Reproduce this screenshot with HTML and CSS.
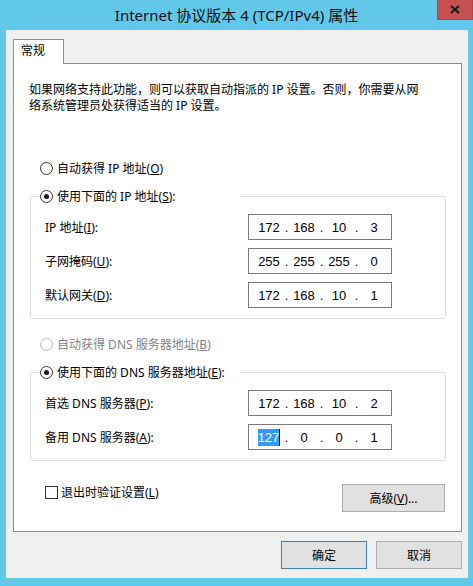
FILE: index.html
```html
<!DOCTYPE html>
<html lang="zh-CN">
<head>
  <meta charset="UTF-8">
  <title>Internet 协议版本 4 (TCP/IPv4) 属性</title>
  <link rel="stylesheet" href="styles.css">
</head>
<body>
  <div class="window">
    <div class="titlebar">
      <span></span>
      <span class="title">Internet 协议版本 4 (TCP/IPv4) 属性</span>
      <button class="close-btn" aria-label="关闭">
        <svg width="10" height="9" viewBox="0 0 10 9"><path d="M1 1 L9 8 M9 1 L1 8" stroke="#1a1a1a" stroke-width="2.2" fill="none"/></svg>
      </button>
    </div>

    <div class="client">
      <div class="tabs">
        <div class="tab">常规</div>
      </div>

      <div class="panel">
        <p class="desc">如果网络支持此功能，则可以获取自动指派的 IP 设置。否则，你需要从网<br>络系统管理员处获得适当的 IP 设置。</p>

        <label class="radio first-radio"><span class="dot"></span><span>自动获得 IP 地址(<u>O</u>)</span></label>

        <fieldset class="group">
          <legend><label class="radio"><span class="dot checked"></span><span>使用下面的 IP 地址(<u>S</u>):</span></label></legend>
          <div class="fields">
            <div class="field-row">
              <span>IP 地址(<u>I</u>):</span>
              <div class="ip-box"><span class="oct">172</span><span class="sep">.</span><span class="oct">168</span><span class="sep">.</span><span class="oct">10</span><span class="sep">.</span><span class="oct">3</span></div>
            </div>
            <div class="field-row">
              <span>子网掩码(<u>U</u>):</span>
              <div class="ip-box"><span class="oct">255</span><span class="sep">.</span><span class="oct">255</span><span class="sep">.</span><span class="oct">255</span><span class="sep">.</span><span class="oct">0</span></div>
            </div>
            <div class="field-row">
              <span>默认网关(<u>D</u>):</span>
              <div class="ip-box"><span class="oct">172</span><span class="sep">.</span><span class="oct">168</span><span class="sep">.</span><span class="oct">10</span><span class="sep">.</span><span class="oct">1</span></div>
            </div>
          </div>
        </fieldset>

        <label class="radio disabled dns-radio"><span class="dot"></span><span>自动获得 DNS 服务器地址(<u>B</u>)</span></label>

        <fieldset class="group">
          <legend><label class="radio"><span class="dot checked"></span><span>使用下面的 DNS 服务器地址(<u>E</u>):</span></label></legend>
          <div class="fields">
            <div class="field-row">
              <span>首选 DNS 服务器(<u>P</u>):</span>
              <div class="ip-box"><span class="oct">172</span><span class="sep">.</span><span class="oct">168</span><span class="sep">.</span><span class="oct">10</span><span class="sep">.</span><span class="oct">2</span></div>
            </div>
            <div class="field-row">
              <span>备用 DNS 服务器(<u>A</u>):</span>
              <div class="ip-box"><span class="oct"><span class="selected">127</span></span><span class="sep">.</span><span class="oct">0</span><span class="sep">.</span><span class="oct">0</span><span class="sep">.</span><span class="oct">1</span></div>
            </div>
          </div>
        </fieldset>

        <div class="bottom-row">
          <label class="check"><span class="box"></span><span>退出时验证设置(<u>L</u>)</span></label>
          <button class="btn advanced">高级(<u>V</u>)...</button>
        </div>
      </div>

      <div class="dialog-buttons">
        <button class="btn default">确定</button>
        <button class="btn">取消</button>
      </div>
    </div>
  </div>
</body>
</html>
```

FILE: styles.css
```css
body {
  margin: 0;
  background-color: #62c8e9;
  font-family: "Noto Sans", "Noto Sans CJK SC", sans-serif;
  font-size: 12px;
  color: #000;
}
.window {
  width: 473px;
  height: 586px;
}
.titlebar {
  height: 30px;
  display: grid;
  grid-template-columns: 36px 1fr 36px;
  align-items: center;
}
.title {
  text-align: center;
  font-size: 15px;
  line-height: 30px;
  color: #111;
}
.close-btn {
  align-self: start;
  width: 36px;
  height: 20px;
  padding: 0;
  border: 1px solid #b04545;
  border-top: none;
  background-color: #c75050;
  display: flex;
  align-items: center;
  justify-content: center;
}
.client {
  width: 462px;
  height: 548px;
  box-sizing: border-box;
  margin-left: 6px;
  padding: 9px 6px 0 7px;
  background-color: #f0f0f0;
}
.tabs {
  display: flex;
  height: 24px;
}
.tab {
  position: relative;
  z-index: 1;
  width: 51px;
  height: 25px;
  box-sizing: border-box;
  background-color: #fff;
  border: 1px solid #898c95;
  border-bottom: none;
  padding-left: 7px;
  line-height: 22px;
}
.panel {
  height: 469px;
  box-sizing: border-box;
  background-color: #fff;
  border: 1px solid #898c95;
}
.desc {
  margin: 18px 0 0 15px;
  line-height: 16px;
}
.radio {
  display: flex;
  align-items: center;
  height: 16px;
  gap: 4px;
  white-space: nowrap;
}
.radio .dot {
  width: 13px;
  height: 13px;
  box-sizing: border-box;
  border: 1px solid #333;
  border-radius: 50%;
  background-color: #fff;
  display: flex;
  align-items: center;
  justify-content: center;
}
.radio .dot.checked::after {
  content: "";
  width: 5px;
  height: 5px;
  border-radius: 50%;
  background-color: #1a1a1a;
}
.radio.disabled {
  color: #838383;
}
.radio.disabled .dot {
  border-color: #bcbcbc;
}
.first-radio {
  margin: 46px 0 0 26px;
}
.dns-radio {
  margin: 17px 0 0 26px;
}
.group {
  width: 416px;
  box-sizing: border-box;
  margin: 12px 0 0 16px;
  padding: 0;
  border: 1px solid #d5dfe5;
  border-radius: 3px;
}
.group legend {
  width: 200px;
  padding: 0;
  margin-left: 9px;
}
.fields {
  display: flex;
  flex-direction: column;
  gap: 8px;
  padding: 10px 0 10px 14px;
}
.field-row {
  display: grid;
  grid-template-columns: 203px 144px;
  align-items: center;
  height: 26px;
}
.ip-box {
  height: 26px;
  box-sizing: border-box;
  border: 1px solid #7a7a7a;
  padding-left: 6px;
  display: flex;
  align-items: center;
  font-family: "Liberation Sans", sans-serif;
  font-size: 13px;
}
.oct {
  width: 28px;
  text-align: center;
}
.sep {
  width: 7px;
  text-align: center;
}
.selected {
  background-color: #3399ff;
  color: #fff;
  border-right: 1px solid #000;
  padding: 1px 0;
}
.bottom-row {
  display: flex;
  justify-content: space-between;
  align-items: flex-start;
  margin-top: 23px;
  padding: 0 16px 0 31px;
}
.check {
  display: flex;
  align-items: center;
  gap: 3px;
  height: 16px;
}
.check .box {
  width: 13px;
  height: 13px;
  box-sizing: border-box;
  border: 1px solid #333;
  background-color: #fff;
}
.btn {
  height: 28px;
  box-sizing: border-box;
  border: 1px solid #adadad;
  background-color: #e1e1e1;
  font-family: inherit;
  font-size: 12px;
  color: #000;
  padding: 0;
}
.advanced {
  width: 103px;
}
.dialog-buttons {
  display: flex;
  justify-content: flex-end;
  gap: 9px;
  margin-top: 9px;
}
.dialog-buttons .btn {
  width: 86px;
}
.btn.default {
  border-color: #3c7fb1;
}
```
